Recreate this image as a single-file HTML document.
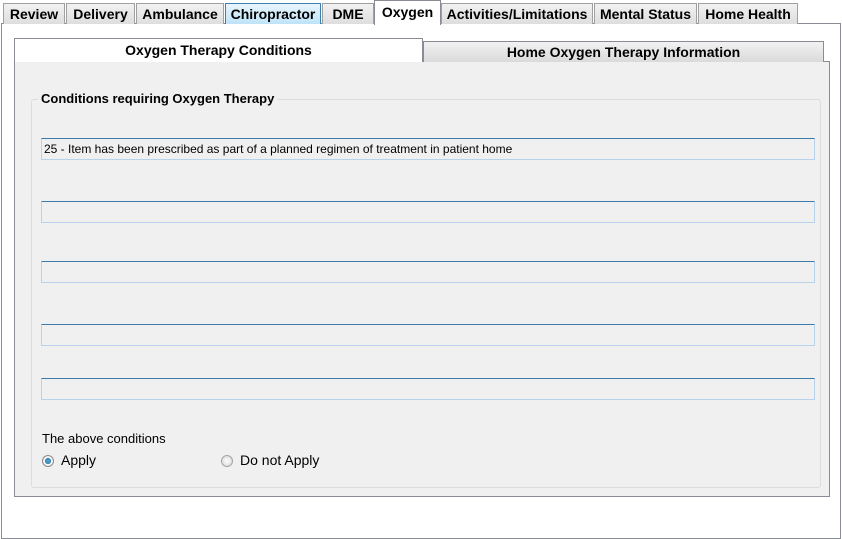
<!DOCTYPE html><html><head><style>
body{margin:0;width:842px;height:539px;background:#fff;position:relative;overflow:hidden;font-family:"Liberation Sans",Arial,sans-serif}
.a{position:absolute;box-sizing:border-box}
.t{position:absolute;top:3px;height:21px;border:1px solid #a0a0a0;border-bottom:none;background:linear-gradient(#f2f2f2,#dedede);font-weight:bold;font-size:14px;line-height:20px;text-align:center;box-sizing:border-box;color:#000}
.tb{position:absolute;left:41px;width:774px;height:22px;border:1px solid #b7d2ea;border-top-color:#3d7bad;background:#f0f0f0;box-sizing:border-box;font-size:12px;line-height:20px;padding-left:2px}
</style></head><body>
<div class="a" style="left:1px;top:23px;width:840px;height:516px;border:1px solid #898c95;background:#fff"></div>
<div class="t" style="left:3px;width:62px">Review</div>
<div class="t" style="left:66px;width:69px">Delivery</div>
<div class="t" style="left:136px;width:88px">Ambulance</div>
<div class="t" style="left:225px;width:96px;background:linear-gradient(#e9f5fd,#bfe3f8);border-color:#3c7fb1">Chiropractor</div>
<div class="t" style="left:322px;width:52px">DME</div>
<div class="t" style="left:374px;top:0;height:25px;width:67px;background:#fff;border-color:#898c95;line-height:22px">Oxygen</div>
<div class="t" style="left:441px;width:152px">Activities/Limitations</div>
<div class="t" style="left:594px;width:103px">Mental Status</div>
<div class="t" style="left:698px;width:100px">Home Health</div>
<div class="a" style="left:14px;top:61px;width:816px;height:436px;border:1px solid #898c95;background:#f0f0f0"></div>
<div class="a" style="left:423px;top:41px;width:401px;height:21px;border:1px solid #898c95;border-bottom:none;background:linear-gradient(#f2f2f2,#dadada);font-weight:bold;font-size:14px;text-align:center;line-height:20px">Home Oxygen Therapy Information</div>
<div class="a" style="left:14px;top:38px;width:409px;height:25px;border:1px solid #898c95;border-bottom:none;background:#fff;font-weight:bold;font-size:14px;text-align:center;line-height:22px">Oxygen Therapy Conditions</div>
<div class="a" style="left:16px;top:62px;width:812px;height:433px;background:#f0f0f0"></div>
<div class="a" style="left:31px;top:99px;width:790px;height:389px;border:1px solid #dcdcdc;border-radius:3px"></div>
<div class="a" style="left:38px;top:91px;background:#f0f0f0;padding:0 3px;font-weight:bold;font-size:13px">Conditions requiring Oxygen Therapy</div>
<div class="tb" style="top:138px">25 - Item has been prescribed as part of a planned regimen of treatment in patient home</div>
<div class="tb" style="top:201px"></div>
<div class="tb" style="top:261px"></div>
<div class="tb" style="top:324px"></div>
<div class="tb" style="top:378px"></div>
<div class="a" style="left:42px;top:431px;font-size:13px">The above conditions</div>
<div class="a" style="left:42px;top:455px;width:12px;height:12px;border-radius:50%;border:1px solid #8a8a8a;background:#f4f4f4"><div class="a" style="left:2px;top:2px;width:6px;height:6px;border-radius:50%;background:radial-gradient(#5fb0e0,#0d5a8f)"></div></div>
<div class="a" style="left:61px;top:452px;font-size:14px">Apply</div>
<div class="a" style="left:221px;top:455px;width:12px;height:12px;border-radius:50%;border:1px solid #a5a5a5;background:radial-gradient(#fff,#d4d4d4)"></div>
<div class="a" style="left:240px;top:452px;font-size:14px">Do not Apply</div>
</body></html>
